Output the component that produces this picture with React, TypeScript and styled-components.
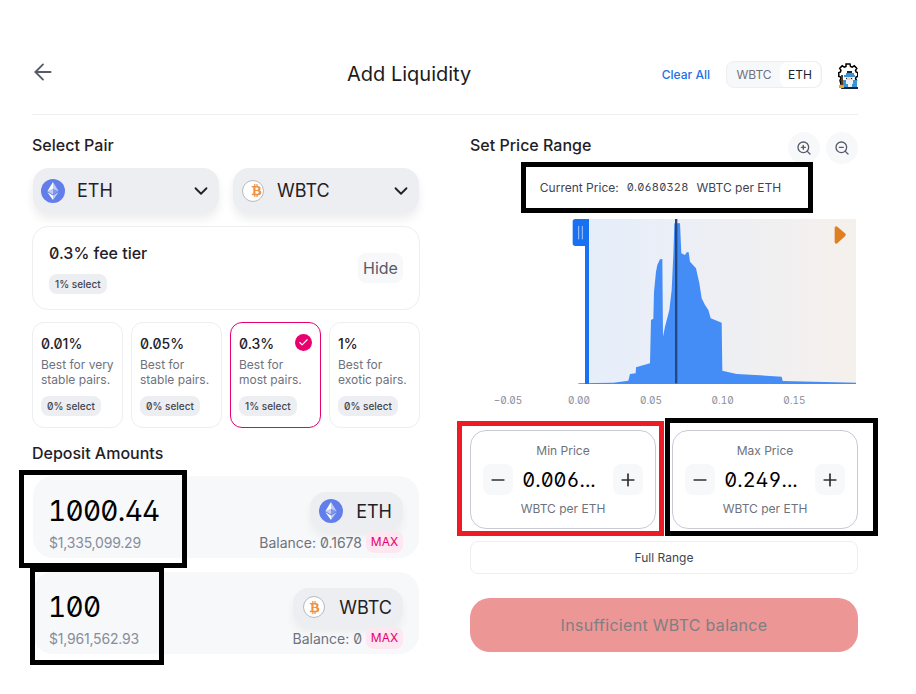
import React from 'react'
import styled, { createGlobalStyle } from 'styled-components'
import { ArrowLeft, Check, ChevronDown, Minus, Plus, ZoomIn, ZoomOut } from 'lucide-react'
import { FaBtc } from 'react-icons/fa'

const GlobalStyle = createGlobalStyle`
  html, body {
    margin: 0;
    padding: 0;
    background: #ffffff;
    font-family: Inter, "Liberation Sans", sans-serif;
    color: #1f2128;
  }
  * { box-sizing: border-box; }
`

const NUM = `font-feature-settings: 'tnum' on, 'zero' on, 'ss01' on;`
const ZERO = `font-feature-settings: 'zero' on;`

const Page = styled.div`
  position: relative;
  width: 916px;
  height: 694px;
  padding: 50px 58px 0 32px;
  overflow: hidden;
`

const Header = styled.header`
  display: flex;
  align-items: center;
  height: 65px;
  padding-bottom: 15px;
  border-bottom: 1px solid #edeef2;
`

const BackButton = styled.div`
  display: flex;
  color: #565a69;
  margin: -5px 0 0 -2px;
`

const Title = styled.h1`
  margin: -2px 0 0 291px;
  font-size: 20px;
  font-weight: 400;
  color: #1a1c22;
`

const HeaderRight = styled.div`
  margin-left: auto;
  display: flex;
  align-items: center;
`

const ClearAll = styled.span`
  font-size: 12px;
  font-weight: 500;
  color: #2172e5;
  margin-right: 16px;
`

const Toggle = styled.div`
  display: flex;
  align-items: center;
  width: 96px;
  height: 27px;
  padding: 0 1px;
  border: 1px solid #edeef2;
  border-radius: 8px;
  background: #f7f8fa;
  margin-right: 16px;
`

const ToggleItem = styled.span<{ $active?: boolean }>`
  flex: ${p => (p.$active ? '0 0 40px' : '1')};
  height: 25px;
  line-height: 25px;
  text-align: center;
  font-size: 12px;
  border-radius: 7px;
  color: ${p => (p.$active ? '#1f2128' : '#6e727d')};
  background: ${p => (p.$active ? '#ffffff' : 'transparent')};
`

const Columns = styled.main`
  display: grid;
  grid-template-columns: 388px 388px;
  column-gap: 50px;
`

const LeftColumn = styled.section`
  padding-top: 20px;
`

const RightColumn = styled.section`
  padding-top: 17px;
`

const SectionTitle = styled.h2`
  margin: 0;
  font-size: 16px;
  line-height: 20px;
  font-weight: 500;
  color: #1f2128;
`

const Selects = styled.div`
  display: flex;
  gap: 14px;
  margin: 13px 1px 13px;
`

const PairSelect = styled.div`
  flex: 1;
  height: 45px;
  display: flex;
  align-items: center;
  gap: 12px;
  padding: 0 7px 0 8px;
  background: #edeef2;
  border-radius: 16px;
  box-shadow: 0 6px 10px rgba(0, 0, 0, 0.075);
  font-size: 18px;
  color: #1f2128;

  svg:last-child {
    margin-left: auto;
  }
`

const FeeCard = styled.div`
  height: 84px;
  display: flex;
  align-items: center;
  justify-content: space-between;
  padding: 0 16px;
  border: 1px solid #edeef2;
  border-radius: 16px;
`

const FeeTitle = styled.div`
  font-size: 16px;
  line-height: 20px;
  font-weight: 500;
  margin-bottom: 9px;
  ${ZERO}
`

const Pill = styled.span`
  display: inline-block;
  height: 20px;
  line-height: 20px;
  padding: 0 6px;
  border-radius: 8px;
  background: #edeef2;
  font-size: 10px;
  font-weight: 500;
  color: #40444f;
  ${ZERO}
`

const HideButton = styled.span`
  width: 45px;
  height: 30px;
  line-height: 30px;
  text-align: center;
  background: #f7f8fa;
  border-radius: 8px;
  font-size: 16px;
  color: #565a69;
`

const Tiers = styled.div`
  display: grid;
  grid-template-columns: repeat(4, 91px);
  column-gap: 8px;
  margin-top: 12px;
`

const TierCard = styled.div<{ $selected?: boolean }>`
  position: relative;
  height: 106px;
  padding: 12px 8px 0;
  border: 1px solid ${p => (p.$selected ? '#e8006f' : '#edeef2')};
  border-radius: 12px;
`

const TierFee = styled.div`
  font-size: 14px;
  line-height: 17px;
  font-weight: 500;
  ${ZERO}
`

const TierText = styled.div`
  margin: 5px 0 7px;
  height: 30px;
  font-size: 12px;
  line-height: 15px;
  color: #6e727d;
  white-space: pre-line;
`

const CheckBadge = styled.span`
  position: absolute;
  top: 11px;
  right: 8px;
  width: 17px;
  height: 17px;
  border-radius: 50%;
  background: #e8006f;
  color: #ffffff;
  display: flex;
  align-items: center;
  justify-content: center;
`

const DepositTitle = styled(SectionTitle)`
  margin: 15px 0 13px;
`

const DepositPanel = styled.div`
  height: 82px;
  margin: 0 1px 14px;
  padding: 17px 16px 0;
  display: flex;
  justify-content: space-between;
  background: #f7f8fa;
  border-radius: 20px;
`

const Amount = styled.div`
  margin-left: -1px;
  font-size: 28px;
  line-height: 36px;
  font-weight: 400;
  letter-spacing: -0.7px;
  color: #000000;
  ${NUM}
`

const UsdValue = styled.div`
  margin-top: 5px;
  font-size: 14px;
  line-height: 17px;
  letter-spacing: -0.2px;
  color: #888d9b;
`

const TokenSide = styled.div`
  display: flex;
  flex-direction: column;
  align-items: flex-end;
  margin-top: -1px;
`

const TokenPill = styled.div`
  flex-shrink: 0;
  height: 38px;
  display: flex;
  align-items: center;
  gap: 13px;
  padding: 0 11px 0 9px;
  border-radius: 16px;
  background: #edeef2;
  box-shadow: 0 6px 10px rgba(0, 0, 0, 0.05);
  font-size: 18px;
`

const BalanceRow = styled.div`
  flex-shrink: 0;
  display: flex;
  align-items: center;
  margin-top: 1px;
  font-size: 14px;
  color: #6e727d;
  ${ZERO}
`

const MaxBadge = styled.span`
  margin-left: 4px;
  height: 22px;
  line-height: 22px;
  width: 37px;
  text-align: center;
  font-size: 12px;
  font-weight: 400;
  border-radius: 8px;
  color: #e8006f;
  background: #fde7f1;
`

const RangeHead = styled.div`
  display: flex;
  align-items: center;
  height: 32px;

  h2 { margin-bottom: 6px; }
`

const ZoomButton = styled.div`
  width: 32px;
  height: 32px;
  margin-left: 6px;
  border-radius: 50%;
  background: #f7f8fa;
  color: #565a69;
  display: flex;
  align-items: center;
  justify-content: center;

  &:first-of-type {
    margin-left: auto;
  }
`

const CurrentPrice = styled.div`
  height: 55px;
  padding: 0 7px 9px 0;
  display: flex;
  align-items: center;
  justify-content: center;
  gap: 8px;
  font-size: 12px;
  font-weight: 400;
  color: #40444f;
`

const PriceValue = styled.span`
  ${NUM}
  font-size: 11px;
  letter-spacing: 0.2px;
`

const ChartSvg = styled.svg`
  display: block;
  width: 388px;
  height: 191px;
`

const AxisLabel = styled.text`
  font-size: 30px;
  fill: #888d9b;
  font-family: Inter, sans-serif;
  font-feature-settings: 'tnum' on, 'zero' on;
  text-anchor: middle;
`

const RangeCards = styled.div`
  display: grid;
  grid-template-columns: 186px 186px;
  column-gap: 16px;
  margin-top: 20px;
`

const RangeCard = styled.div`
  height: 99px;
  padding-top: 12px;
  border: 1px solid #c9cad6;
  border-radius: 16px;
  text-align: center;
`

const RangeLabel = styled.div`
  font-size: 12px;
  line-height: 15px;
  color: #6e727d;
`

const Stepper = styled.div`
  display: flex;
  align-items: center;
  justify-content: space-between;
  padding: 0 12px;
  margin: 6px 0 6px;
`

const StepButton = styled.div`
  width: 30px;
  height: 31px;
  border-radius: 8px;
  background: #f7f8fa;
  color: #2c2f36;
  display: flex;
  align-items: center;
  justify-content: center;
`

const StepValue = styled.div`
  margin-right: 8px;
  font-size: 20px;
  color: #000000;
  ${NUM}
`

const FullRange = styled.div`
  height: 33px;
  margin-top: 12px;
  line-height: 31px;
  text-align: center;
  border: 1px solid #edeef2;
  border-radius: 8px;
  font-size: 12px;
  color: #40444f;
`

const SubmitButton = styled.div`
  height: 54px;
  margin-top: 24px;
  line-height: 54px;
  text-align: center;
  border-radius: 20px;
  background: #ed9696;
  color: #7f7f82;
  font-size: 16px;
  font-weight: 400;
  letter-spacing: 0.3px;
`

const Annotation = styled.div<{ $l: number; $t: number; $w: number; $h: number; $red?: boolean }>`
  position: absolute;
  left: ${p => p.$l}px;
  top: ${p => p.$t}px;
  width: ${p => p.$w}px;
  height: ${p => p.$h}px;
  border: 5px solid ${p => (p.$red ? '#ed1c24' : '#000000')};
  pointer-events: none;
`

const WizardSvg = styled.svg`
  display: block;
  margin-top: 2px;
`

const EthIcon: React.FC<{ size?: number }> = ({ size = 24 }) => (
  <svg width={size} height={size} viewBox="0 0 32 32">
    <circle cx="16" cy="16" r="16" fill="#627eea" />
    <path d="M16 4v8.9l7.5 3.3z" fill="#fff" fillOpacity=".6" />
    <path d="M16 4L8.5 16.2l7.5-3.3z" fill="#fff" />
    <path d="M16 22v6l7.5-10.4z" fill="#fff" fillOpacity=".6" />
    <path d="M16 28v-6l-7.5-4.4z" fill="#fff" />
    <path d="M16 20.6l7.5-4.4-7.5-3.3z" fill="#fff" fillOpacity=".2" />
    <path d="M8.5 16.2l7.5 4.4v-7.7z" fill="#fff" fillOpacity=".6" />
  </svg>
)

const BtcCircle = styled.span`
  width: 22px;
  height: 22px;
  margin: 0 1px;
  border-radius: 50%;
  background: #ffffff;
  border: 1px solid #b9b9be;
  color: #f09242;
  display: flex;
  align-items: center;
  justify-content: center;
`

const BtcIcon = () => (
  <BtcCircle>
    <FaBtc size={13} />
  </BtcCircle>
)

const WizardIcon = () => (
  <WizardSvg width="20" height="26" viewBox="0 0 20 26">
    <path
      d="M8 1h4l.5 2.4 1.7.7 2.1-1.3 2.5 2.6-1.3 2 .7 1.7 1.5.4v4l-1.5.4-.7 1.7 1 1.8-2 8H4l-2-8 1-1.8-.7-1.7-1.5-.4v-4l1.5-.4.7-1.7-1.3-2 2.5-2.6 2.1 1.3 1.7-.7z"
      fill="#fff"
      stroke="#000"
      strokeWidth="1.5"
    />
    <g shapeRendering="crispEdges">
      <rect x="9" y="8" width="5" height="2" fill="#14263f" />
      <rect x="8" y="10" width="8" height="2" fill="#3a93d6" />
      <rect x="6" y="12" width="11" height="2" fill="#3a93d6" />
      <rect x="5" y="17" width="14" height="8" fill="#3a93d6" />
      <rect x="4" y="24" width="16" height="2" fill="#14263f" />
      <rect x="8" y="14" width="7" height="3" fill="#f2d4b8" />
      <rect x="8" y="15" width="1" height="1" fill="#14263f" />
      <rect x="13" y="15" width="1" height="1" fill="#14263f" />
      <rect x="8" y="17" width="7" height="4" fill="#eef1f4" />
      <rect x="9.5" y="21" width="4" height="3" fill="#eef1f4" />
      <rect x="3" y="12" width="1.5" height="10" fill="#5a3a1c" />
      <rect x="1" y="22" width="5" height="3" fill="#e6a81d" />
    </g>
  </WizardSvg>
)

// traced from the chart, units are 1/3 px
const histogram = [
  [355, 520], [460, 518], [505, 512], [510, 492], [527, 490], [528, 472], [570, 460], [573, 330],
  [580, 326], [582, 245], [588, 185], [592, 165], [600, 148], [607, 147], [609, 380], [615, 350],
  [628, 300], [635, 240], [640, 135], [643, 40], [660, 40], [664, 130], [675, 135], [680, 127],
  [686, 127], [690, 155], [708, 175], [718, 220], [725, 265], [735, 285], [745, 300], [752, 325],
  [785, 338], [787, 482], [830, 492], [965, 500], [968, 513], [1188, 518], [1188, 522], [355, 522],
]
  .map(p => p.join(','))
  .join(' ')

const axis: [string, number][] = [
  ['−0.05', 144],
  ['0.00', 357],
  ['0.05', 573],
  ['0.10', 788],
  ['0.15', 1003],
]

const PriceChart = () => (
  <ChartSvg viewBox="30 27 1164 573">
    <defs>
      <linearGradient id="range" x1="0" x2="1" y1="0" y2="0">
        <stop offset="0" stopColor="#e6eefb" />
        <stop offset="1" stopColor="#f5f0ec" />
      </linearGradient>
    </defs>
    <rect x="387" y="27" width="801" height="493" fill="url(#range)" />
    <polygon points={histogram} fill="#448cf6" />
    <rect x="645" y="27" width="7" height="493" fill="#24497f" />
    <rect x="375" y="27" width="12" height="495" fill="#1672f3" />
    <path d="M346 27h32v81h-32a8 8 0 0 1-8-8V35a8 8 0 0 1 8-8z" fill="#1672f3" />
    <path d="M356 48v40M367 48v40" stroke="#a9c9fb" strokeWidth="3" />
    <path d="M1124 54a5 5 0 0 1 8-4l23 20a6 6 0 0 1 0 9l-23 21a5 5 0 0 1-8-4z" fill="#e07f20" />
    {axis.map(([label, x]) => (
      <AxisLabel key={label} x={x} y={581}>
        {label}
      </AxisLabel>
    ))}
  </ChartSvg>
)

const tiers = [
  { fee: '0.01%', text: 'Best for very\nstable pairs.', pill: '0% select' },
  { fee: '0.05%', text: 'Best for\nstable pairs.', pill: '0% select' },
  { fee: '0.3%', text: 'Best for\nmost pairs.', pill: '1% select', selected: true },
  { fee: '1%', text: 'Best for\nexotic pairs.', pill: '0% select' },
]

const PriceCard: React.FC<{ label: string; value: string }> = ({ label, value }) => (
  <RangeCard>
    <RangeLabel>{label}</RangeLabel>
    <Stepper>
      <StepButton>
        <Minus size={20} />
      </StepButton>
      <StepValue>{value}</StepValue>
      <StepButton>
        <Plus size={20} />
      </StepButton>
    </Stepper>
    <RangeLabel>WBTC per ETH</RangeLabel>
  </RangeCard>
)

const App: React.FC = () => (
  <Page>
    <GlobalStyle />
    <Header>
      <BackButton>
        <ArrowLeft size={26} strokeWidth={1.7} />
      </BackButton>
      <Title>Add Liquidity</Title>
      <HeaderRight>
        <ClearAll>Clear All</ClearAll>
        <Toggle>
          <ToggleItem>WBTC</ToggleItem>
          <ToggleItem $active>ETH</ToggleItem>
        </Toggle>
        <WizardIcon />
      </HeaderRight>
    </Header>
    <Columns>
      <LeftColumn>
        <SectionTitle>Select Pair</SectionTitle>
        <Selects>
          <PairSelect>
            <EthIcon />
            ETH
            <ChevronDown size={22} />
          </PairSelect>
          <PairSelect>
            <BtcIcon />
            WBTC
            <ChevronDown size={22} />
          </PairSelect>
        </Selects>
        <FeeCard>
          <div>
            <FeeTitle>0.3% fee tier</FeeTitle>
            <Pill>1% select</Pill>
          </div>
          <HideButton>Hide</HideButton>
        </FeeCard>
        <Tiers>
          {tiers.map(t => (
            <TierCard key={t.fee} $selected={t.selected}>
              <TierFee>{t.fee}</TierFee>
              <TierText>{t.text}</TierText>
              <Pill>{t.pill}</Pill>
              {t.selected && (
                <CheckBadge>
                  <Check size={11} strokeWidth={2.5} />
                </CheckBadge>
              )}
            </TierCard>
          ))}
        </Tiers>
        <DepositTitle>Deposit Amounts</DepositTitle>
        <DepositPanel>
          <div>
            <Amount>1000.44</Amount>
            <UsdValue>$1,335,099.29</UsdValue>
          </div>
          <TokenSide>
            <TokenPill>
              <EthIcon />
              ETH
            </TokenPill>
            <BalanceRow>
              Balance: 0.1678
              <MaxBadge>MAX</MaxBadge>
            </BalanceRow>
          </TokenSide>
        </DepositPanel>
        <DepositPanel>
          <div>
            <Amount>100</Amount>
            <UsdValue>$1,961,562.93</UsdValue>
          </div>
          <TokenSide>
            <TokenPill>
              <BtcIcon />
              WBTC
            </TokenPill>
            <BalanceRow>
              Balance: 0
              <MaxBadge>MAX</MaxBadge>
            </BalanceRow>
          </TokenSide>
        </DepositPanel>
      </LeftColumn>
      <RightColumn>
        <RangeHead>
          <SectionTitle>Set Price Range</SectionTitle>
          <ZoomButton>
            <ZoomIn size={16} />
          </ZoomButton>
          <ZoomButton>
            <ZoomOut size={16} />
          </ZoomButton>
        </RangeHead>
        <CurrentPrice>
          <span>Current Price:</span>
          <PriceValue>0.0680328</PriceValue>
          <span>WBTC per ETH</span>
        </CurrentPrice>
        <PriceChart />
        <RangeCards>
          <PriceCard label="Min Price" value="0.006..." />
          <PriceCard label="Max Price" value="0.249..." />
        </RangeCards>
        <FullRange>Full Range</FullRange>
        <SubmitButton>Insufficient WBTC balance</SubmitButton>
      </RightColumn>
    </Columns>
    <Annotation $l={521} $t={162} $w={292} $h={51} />
    <Annotation $l={457} $t={421} $w={207} $h={115} $red />
    <Annotation $l={665} $t={418} $w={213} $h={118} />
    <Annotation $l={19} $t={470} $w={168} $h={98} />
    <Annotation $l={30} $t={567} $w={134} $h={98} />
  </Page>
)

export default App
